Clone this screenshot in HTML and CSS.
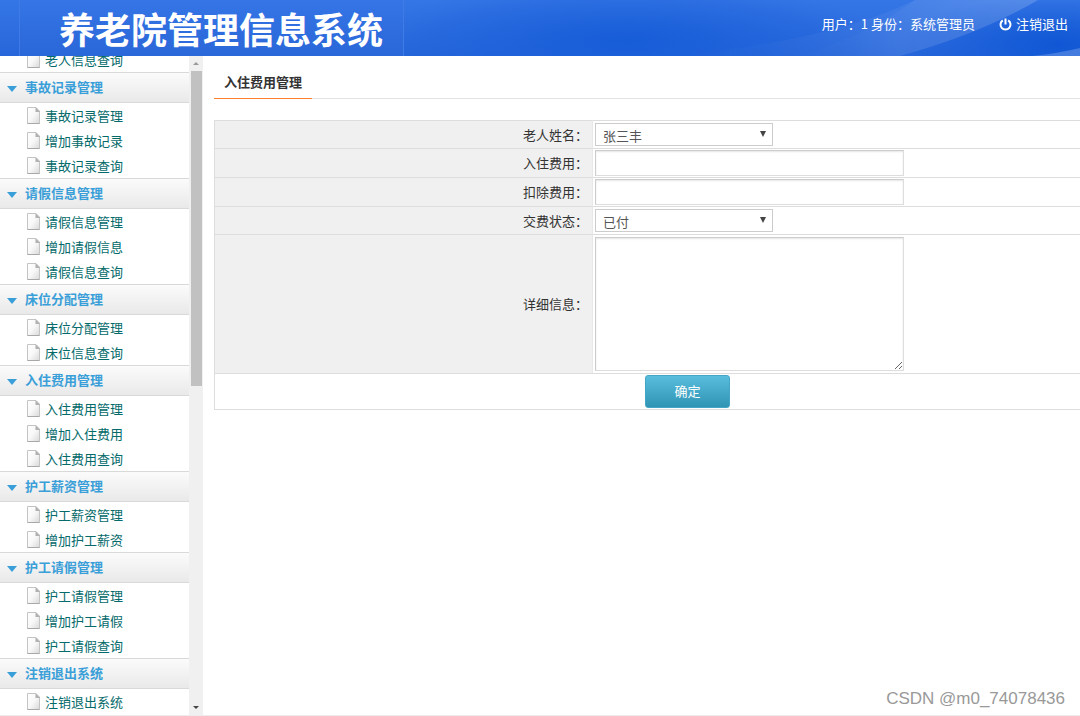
FILE: index.html
```html
<!DOCTYPE html>
<html lang="zh-CN">
<head>
<meta charset="utf-8">
<title>养老院管理信息系统</title>
<link rel="stylesheet" href="styles.css">
</head>
<body>
<svg class="defs" aria-hidden="true">
  <defs>
    <linearGradient id="paper" x1="0" y1="0" x2="1" y2="1"><stop offset="0" stop-color="#fff"/><stop offset=".5" stop-color="#f8f8f8"/><stop offset="1" stop-color="#d8d8d8"/></linearGradient>
    <symbol id="doc" viewBox="0 0 13 17">
      <path d="M.5 .5h8.500l3.500 3.500v12.500h-12z" fill="url(#paper)" stroke="#c4c4c4"/>
      <path d="M8.500 0l4.500 5H8.500z" fill="#b0b0b0"/>
      <path d="M.5 16.500h12" stroke="#a8a8a8"/>
    </symbol>
  </defs>
</svg>
<header class="top">
  <svg class="top-art" viewBox="0 0 1080 56" preserveAspectRatio="none" aria-hidden="true">
    <defs>
      <linearGradient id="ray" x1="0" y1="0" x2="1" y2="0"><stop offset="0" stop-color="#fff" stop-opacity="0"/><stop offset="1" stop-color="#fff" stop-opacity=".09"/></linearGradient>
    </defs>
    <path d="M800 56Q870 34 915 0H1038Q980 34 900 56z" fill="url(#ray)"/>
    <path d="M680 56Q840 38 915 0H1038Q980 34 900 56z" fill="url(#ray)"/>
    <path d="M1032 56Q1060 53 1080 48V56z" fill="#fff" opacity=".2"/>
  </svg>
  <h1 class="logo">养老院管理信息系统</h1>
  <div class="account">
    <span>用户：1 身份：系统管理员</span>
    <a class="logout" href="#"><svg class="power" viewBox="0 0 13 13" aria-hidden="true"><path d="M3.8 2.4a5 5 0 1 0 5.4 0M6.5 .5v6" fill="none" stroke="currentColor" stroke-width="2"/></svg>注销退出</a>
  </div>
</header>
<div class="body">
  <nav class="side">
    <div class="menu">
      <a class="item" href="#"><svg class="doc"><use href="#doc"/></svg>老人信息查询</a>
      <button class="group" type="button">事故记录管理</button>
      <a class="item" href="#"><svg class="doc"><use href="#doc"/></svg>事故记录管理</a>
      <a class="item" href="#"><svg class="doc"><use href="#doc"/></svg>增加事故记录</a>
      <a class="item" href="#"><svg class="doc"><use href="#doc"/></svg>事故记录查询</a>
      <button class="group" type="button">请假信息管理</button>
      <a class="item" href="#"><svg class="doc"><use href="#doc"/></svg>请假信息管理</a>
      <a class="item" href="#"><svg class="doc"><use href="#doc"/></svg>增加请假信息</a>
      <a class="item" href="#"><svg class="doc"><use href="#doc"/></svg>请假信息查询</a>
      <button class="group" type="button">床位分配管理</button>
      <a class="item" href="#"><svg class="doc"><use href="#doc"/></svg>床位分配管理</a>
      <a class="item" href="#"><svg class="doc"><use href="#doc"/></svg>床位信息查询</a>
      <button class="group" type="button">入住费用管理</button>
      <a class="item" href="#"><svg class="doc"><use href="#doc"/></svg>入住费用管理</a>
      <a class="item" href="#"><svg class="doc"><use href="#doc"/></svg>增加入住费用</a>
      <a class="item" href="#"><svg class="doc"><use href="#doc"/></svg>入住费用查询</a>
      <button class="group" type="button">护工薪资管理</button>
      <a class="item" href="#"><svg class="doc"><use href="#doc"/></svg>护工薪资管理</a>
      <a class="item" href="#"><svg class="doc"><use href="#doc"/></svg>增加护工薪资</a>
      <button class="group" type="button">护工请假管理</button>
      <a class="item" href="#"><svg class="doc"><use href="#doc"/></svg>护工请假管理</a>
      <a class="item" href="#"><svg class="doc"><use href="#doc"/></svg>增加护工请假</a>
      <a class="item" href="#"><svg class="doc"><use href="#doc"/></svg>护工请假查询</a>
      <button class="group" type="button">注销退出系统</button>
      <a class="item" href="#"><svg class="doc"><use href="#doc"/></svg>注销退出系统</a>
    </div>
    <div class="scroll" aria-hidden="true">
      <span class="arrow up"></span>
      <span class="rail"><span class="thumb"></span></span>
      <span class="arrow down"></span>
    </div>
  </nav>
  <main class="main">
    <div class="tabs"><h2 class="tab">入住费用管理</h2></div>
    <form>
      <table class="form">
        <tr><th><label for="name">老人姓名：</label></th><td><span class="pick"><select id="name"><option>张三丰</option></select></span></td></tr>
        <tr class="slim"><th><label for="fee">入住费用：</label></th><td><input id="fee" class="field" type="text"></td></tr>
        <tr class="slim"><th><label for="deduct">扣除费用：</label></th><td><input id="deduct" class="field" type="text"></td></tr>
        <tr><th><label for="state">交费状态：</label></th><td><span class="pick"><select id="state"><option>已付</option></select></span></td></tr>
        <tr><th><label for="detail">详细信息：</label></th><td><textarea id="detail" class="field area"></textarea></td></tr>
        <tr class="slim"><td class="actions" colspan="2"><button class="submit" type="submit">确定</button></td></tr>
      </table>
    </form>
    <p class="mark">CSDN @m0_74078436</p>
  </main>
</div>
</body>
</html>
```
FILE: styles.css
```css
* { box-sizing: border-box; }
body {
  margin: 0;
  height: 100vh;
  display: flex;
  flex-direction: column;
  overflow: hidden;
  background: #fff;
  color: #333;
  font: 13px/20px "Noto Sans CJK SC", sans-serif;
}
a { color: inherit; text-decoration: none; }
button, input, select, textarea { font: inherit; margin: 0; }
.defs { position: absolute; width: 0; height: 0; }

.top {
  position: relative;
  flex: none;
  display: flex;
  justify-content: space-between;
  height: 56px;
  padding: 0 12px 0 19px;
  color: #fff;
  background:
    radial-gradient(ellipse 260px 60px at 58% 75%, #175dd8 0%, #175dd800 100%),
    radial-gradient(ellipse 160px 50px at 98% 80%, #1057d5 0%, #1057d500 100%),
    linear-gradient(#3576e6, #2766da);
}
.top-art { position: absolute; inset: 0; width: 100%; height: 100%; }
.logo {
  position: relative;
  margin: 0;
  padding: 0 20px 0 39px;
  border: 1px solid #3f7be6;
  border-width: 0 1px;
  background: linear-gradient(#3575e6, #2a67d9);
  font-size: 36px;
  line-height: 56px;
  font-weight: 700;
}
.account { position: relative; display: flex; gap: 24px; padding-top: 14px; }
.logout { display: flex; align-items: center; gap: 4px; height: 20px; }
.power { width: 13px; height: 13px; }

.body { flex: 1; min-height: 0; display: flex; border-bottom: 1px solid #ececec; }
.side { flex: none; display: flex; width: 203px; }
.menu {
  flex: 1;
  min-width: 0;
  display: flex;
  flex-direction: column;
  justify-content: flex-end;
  overflow: hidden;
  padding-bottom: 1px;
}
.item {
  flex: none;
  display: flex;
  align-items: center;
  gap: 5px;
  height: 25px;
  padding-left: 27px;
  color: #046a6a;
}
.doc { width: 13px; height: 17px; }
.group {
  flex: none;
  display: flex;
  align-items: center;
  gap: 8px;
  height: 31px;
  padding: 0 0 2px 7px;
  border: solid #d9d9d9;
  border-width: 1px 0;
  background: linear-gradient(#fbfbfb, #e9e9e9);
  color: #3a9fd8;
  font-weight: 700;
}
.group::before {
  content: "";
  margin-top: 5px;
  border: 5px solid transparent;
  border-top: 6px solid #3a9fd8;
  border-bottom: 0;
}
.scroll {
  flex: none;
  display: flex;
  flex-direction: column;
  width: 14px;
  background: #f0f0f0;
}
.arrow { display: flex; align-items: center; justify-content: center; height: 15px; }
.arrow::before { content: ""; border: 3px solid transparent; }
.up::before { border-bottom-color: #999; border-top: 0; }
.down::before { border-top-color: #444; border-bottom: 0; }
.rail { flex: 1; padding: 0 1px 0 2px; }
.thumb { display: block; height: 50%; background: #c1c1c1; }

.main { flex: 1; min-width: 0; overflow: hidden; padding: 12px 0 0 11px; }
.tabs { display: flex; border-bottom: 1px solid #e2e2e2; margin-bottom: 21px; }
.tab {
  margin: 0 0 -1px;
  padding: 4px 10px 6px;
  border-bottom: 1px solid #ff7f27;
  font-size: 13px;
  line-height: 20px;
  font-weight: 700;
}
.form {
  width: calc(100% + 80px);
  table-layout: fixed;
  border-collapse: separate;
  border-spacing: 0;
  border: solid #ddd;
  border-width: 0 0 1px 1px;
}
.form th, .form td { padding: 2px; border-top: 1px solid #ddd; }
.form th {
  width: 40%;
  padding-right: 4px;
  border-right: 1px solid #e8e8e8;
  background: #f0f0f0;
  text-align: right;
  font-weight: 400;
}
.form .slim th, .form .slim td { padding-top: 1px; padding-bottom: 1px; }
.form td.actions { text-align: center; }
.pick { position: relative; display: block; width: 178px; }
.pick::after {
  content: "";
  position: absolute;
  top: 8px;
  right: 7px;
  border: 3px solid transparent;
  border-top: 6px solid #444;
  border-bottom: 0;
  pointer-events: none;
}
.pick select {
  display: block;
  width: 100%;
  height: 23px;
  padding: 2px 7px 0;
  border: 1px solid #ccc;
  border-radius: 0;
  appearance: none;
  background: #fff;
  color: #555;
  line-height: 18px;
}
.field {
  display: block;
  width: 309px;
  height: 26px;
  padding: 2px 7px;
  border: 1px solid #ccc;
  border-right-color: #ddd;
  border-bottom-color: #ddd;
  background: #fff;
  box-shadow: inset 0 1px 2px #0000001a;
}
.area { height: 134px; resize: both; }
.submit {
  display: block;
  width: 85px;
  height: 33px;
  margin: 0 auto;
  padding: 0 0 2px;
  border: 1px solid #45a5c4;
  border-radius: 3px;
  background: linear-gradient(#59bddd, #3095b5);
  color: #fff;
}
.mark {
  position: absolute;
  right: 15px;
  bottom: 5px;
  margin: 0;
  color: #999;
  font: 17px/24px "Liberation Sans", Arial, sans-serif;
}
```
